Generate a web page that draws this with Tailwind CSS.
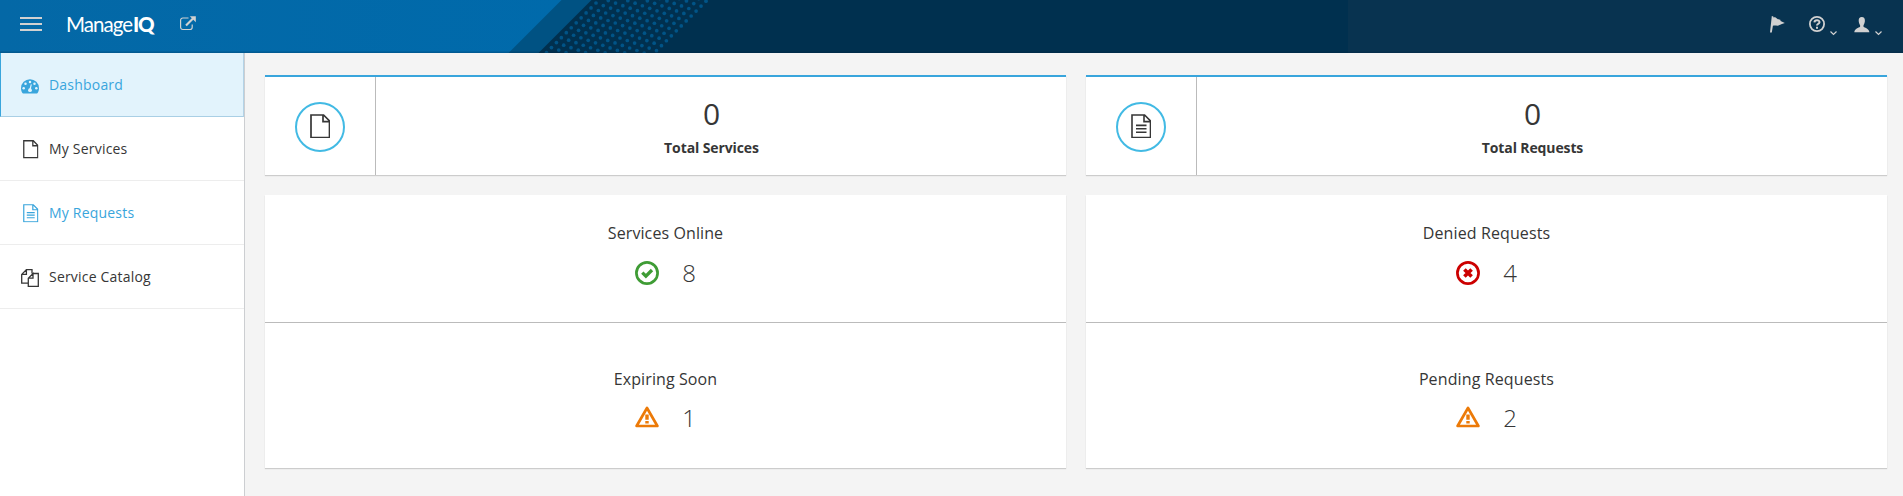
<!DOCTYPE html>
<html lang="en">
<head>
<meta charset="utf-8">
<title>ManageIQ</title>
<script src="https://cdn.jsdelivr.net/npm/@tailwindcss/browser@4"></script>
</head>
<body class="flex h-[496px] flex-col overflow-hidden bg-[#f4f4f4] font-['Open_Sans',sans-serif] text-[#363636]">
<svg class="hidden">
  <symbol id="file" viewBox="0 0 20.5 24.5"><path d="M1 1H13.6L19.5 6.9V23.5H1ZM13 1V7.6H19.5" fill="none" stroke="currentColor" stroke-width="1.7"/></symbol>
  <symbol id="file-text" viewBox="0 0 20.5 24.5"><path d="M1 1H13.6L19.5 6.9V23.5H1ZM13 1V7.6H19.5M5 11.4H15.5M5 14.8H15.5M5 18.2H15.5" fill="none" stroke="currentColor" stroke-width="1.6"/></symbol>
  <symbol id="warn" viewBox="0 0 24 22"><path d="M12 2L22.4 20H1.6Z" fill="none" stroke="currentColor" stroke-width="2.7" stroke-linejoin="round"/><path d="M10.3 8.5h3.4v5.3h-3.4zM10.3 15h3.4v2.4h-3.4z" fill="currentColor"/></symbol>
</svg>
<header class="relative h-[53px] shrink-0 bg-[#00304f]">
  <svg class="absolute inset-0" width="1903" height="53" viewBox="0 0 1903 53">
    <defs><linearGradient id="g"><stop offset="0" stop-color="#0468a6"/><stop offset="1" stop-color="#006aab"/></linearGradient></defs>
    <path d="M0 0H591.5L538.5 53H0Z" fill="#005283"/>
    <path d="M0 0H561.5L508.5 53H0Z" fill="url(#g)"/>
    <g id="dots" fill="#005487"></g>
    <path d="M1348 0H1903V53H1348Z" fill="#083350"/>
    <path d="M0 51.5H1903V53H0Z" fill="#001c38" fill-opacity=".2"/>
  </svg>
  <div class="relative flex h-full items-start">
    <svg class="ml-5 mt-4 shrink-0" width="22" height="16" viewBox="0 0 22 16" fill="#d1d1d1"><path d="M0 1h22v2H0zM0 7h22v2H0zM0 13h22v2H0z"/></svg>
    <div class="mt-[9px] ml-6 flex w-[90px] shrink-0 font-['Lato',sans-serif] text-[20.5px] leading-[30px] whitespace-nowrap text-white"><span class="w-[67px] tracking-[-0.95px]">Manage</span><span class="font-black tracking-[-1.2px]">IQ</span></div>
    <svg class="ml-6 mt-4 shrink-0" width="16" height="15" viewBox="0 0 16 15" fill="none" stroke="#d1d1d1"><path d="M8.5 2H2.8A2.2 2.2 0 0 0 .6 4.2V11.3A2.2 2.2 0 0 0 2.8 13.5H10A2.2 2.2 0 0 0 12.2 11.3V8.5" stroke-width="1.2"/><path d="M6 9.5L13 2.5" stroke-width="2.2"/><path d="M9.8.3H15.8V6.3Z" fill="#d1d1d1" stroke="none"/></svg>
    <div class="ml-auto flex items-start pr-[21px]">
      <svg class="mt-4" width="15" height="17" viewBox="0 0 15 17" fill="#d1d1d1"><path d="M1.8 0L3.4.4 3.3 1.4C5.2.9 6.2 1.8 7.2 2.7C8.3 3.5 9.4 3.3 10.3 3.7L10.6 5.1C12 5.7 13.4 6.5 14.8 7.1C12.7 7.7 11 8.3 9.6 9.1C8 10.2 5.4 9.2 2.9 9.8L1.8 16.4H0Z"/></svg>
      <svg class="ml-[24px] mt-4" width="16" height="16" viewBox="0 0 16 16"><circle cx="8" cy="8" r="7.1" fill="none" stroke="#d1d1d1" stroke-width="1.8"/><path d="M5.4 6.4C5.6 3.6 10.6 3.7 10.5 6.2C10.4 7.8 8 7.7 8 9.6M8 10.7V12.7" fill="none" stroke="#d1d1d1" stroke-width="2"/></svg>
      <svg class="ml-[5px] mt-[31px]" width="7" height="5" viewBox="0 0 7 5"><path d="M.5.5L3.5 3.5L6.5.5" fill="none" stroke="#d1d1d1" stroke-width="1.2"/></svg>
      <svg class="ml-[17px] mt-[17px]" width="16" height="16" viewBox="0 0 16 16" fill="#d1d1d1"><path d="M7.8 0C10 0 11 1.5 10.9 4C10.8 6 10 7.2 9.5 8.2V9.8C11 11 15 11.5 15.4 15.3H.3C.6 11.5 4.6 11 6.1 9.8V8.2C5.6 7.2 4.8 6 4.7 4C4.6 1.5 5.6 0 7.8 0Z"/></svg>
      <svg class="ml-[5px] mt-[31px]" width="7" height="5" viewBox="0 0 7 5"><path d="M.5.5L3.5 3.5L6.5.5" fill="none" stroke="#d1d1d1" stroke-width="1.2"/></svg>
    </div>
  </div>
</header>
<div class="flex min-h-0 flex-1">
  <nav class="w-[245px] shrink-0 border-r border-[#ccced1] bg-white text-sm leading-5 tracking-[0.2px]">
    <a class="flex h-16 items-center border-r border-b border-l border-b-[#a9cfe5] border-l-[#39a5dc] border-r-[#b3d3e7] bg-[#e2f3fc] pl-5 text-[#39a5dc]">
      <svg class="mt-0.5 mr-2.5 -mb-0.5" width="18" height="15" viewBox="0 0 18 15"><path d="M9 .2A9 9 0 0 0 0 9.2C0 11 .5 12.6 1.4 14.1Q1.6 14.5 2.1 14.5H15.9Q16.4 14.5 16.6 14.1C17.5 12.6 18 11 18 9.2A9 9 0 0 0 9 .2Z" fill="#39a5dc"/><g fill="#e2f3fc"><circle cx="2.7" cy="9.2" r="1.25"/><circle cx="4.5" cy="4.8" r="1.25"/><circle cx="9" cy="2.9" r="1.25"/><circle cx="13.5" cy="4.8" r="1.25"/><circle cx="15.3" cy="9.2" r="1.25"/><circle cx="9" cy="11.2" r="1.9"/><path d="M8.3 10.5L9.8 5.2L10.8 5.5L9.7 10.8Z"/></g></svg>
      <span>Dashboard</span></a>
    <a class="flex h-16 items-center border-b border-[#ededed] pl-[23px]"><svg class="mt-px mr-[10.5px] -mb-px" width="15.5" height="18.5"><use href="#file"/></svg><span>My Services</span></a>
    <a class="flex h-16 items-center border-b border-[#ededed] pl-[23px] text-[#39a5dc]"><svg class="mt-px mr-[10.5px] -mb-px" width="15.5" height="18.5"><use href="#file-text"/></svg><span>My Requests</span></a>
    <a class="flex h-16 items-center border-b border-[#ededed] pl-[21px]"><svg class="mt-px mr-2.5 -mb-px" width="18" height="18" viewBox="0 0 18 18" fill="none" stroke="currentColor" stroke-width="1.3"><path d="M7 14.2H.7V5.4L5.4.7H11V4.4M5.4.7V5.4H.7M12.2 4.5H17.3V17.3H7.3V9.2L12 4.5V9.2H7.3"/></svg><span>Service Catalog</span></a>
  </nav>
  <main class="grid flex-1 grid-cols-2 content-start gap-5 pt-[22px] pr-4 pl-5">
    <section class="flex h-[100px] border-t-2 border-[#39a5dc] bg-white shadow-[0_1px_1px_rgba(3,3,3,0.17)]">
      <div class="flex w-[111px] items-center justify-center border-r border-[#bbb]"><div class="mt-0.5 flex size-[50px] items-center justify-center rounded-full border-2 border-[#42bae4]"><svg class="-mt-0.5" width="20.5" height="24.5"><use href="#file"/></svg></div></div>
      <div class="flex flex-1 flex-col items-center pt-[15px] pr-[19px]"><div class="text-[30px] leading-[44px]">0</div><div class="mt-0.5 text-sm leading-5 font-bold tracking-[-0.1px]">Total Services</div></div>
    </section>
    <section class="flex h-[100px] border-t-2 border-[#39a5dc] bg-white shadow-[0_1px_1px_rgba(3,3,3,0.17)]">
      <div class="flex w-[111px] items-center justify-center border-r border-[#bbb]"><div class="mt-0.5 flex size-[50px] items-center justify-center rounded-full border-2 border-[#42bae4]"><svg class="-mt-0.5" width="20.5" height="24.5"><use href="#file-text"/></svg></div></div>
      <div class="flex flex-1 flex-col items-center pt-[15px] pr-[19px]"><div class="text-[30px] leading-[44px]">0</div><div class="mt-0.5 text-sm leading-5 font-bold tracking-[-0.12px]">Total Requests</div></div>
    </section>
    <section class="h-[273px] bg-white text-center shadow-[0_1px_1px_rgba(3,3,3,0.17)]">
      <div class="h-32 border-b border-[#bbb] pt-[26px]"><h2 class="text-base leading-6 tracking-[0.1px]">Services Online</h2>
        <div class="mt-2 flex items-center justify-center gap-[23px]"><svg width="24" height="24" viewBox="0 0 24 24" fill="none" stroke="#3f9c35"><circle cx="12" cy="12" r="10.6" stroke-width="2.7"/><path d="M7.3 11.6L10.9 15.2L17 9" stroke-width="3.3"/></svg><span class="text-2xl leading-10 font-light">8</span></div></div>
      <div class="pt-[44px]"><h2 class="text-base leading-6 tracking-[0.1px]">Expiring Soon</h2>
        <div class="mt-[7px] flex items-center justify-center gap-[23px]"><svg class="-mt-0.5 text-[#ec7a08]" width="24" height="22"><use href="#warn"/></svg><span class="text-2xl leading-10 font-light">1</span></div></div>
    </section>
    <section class="h-[273px] bg-white text-center shadow-[0_1px_1px_rgba(3,3,3,0.17)]">
      <div class="h-32 border-b border-[#bbb] pt-[26px]"><h2 class="text-base leading-6 tracking-[0.12px]">Denied Requests</h2>
        <div class="mt-2 flex items-center justify-center gap-[23px]"><svg width="24" height="24" viewBox="0 0 24 24" fill="none" stroke="#c00"><circle cx="12" cy="12" r="10.6" stroke-width="2.7"/><path d="M8.4 8.4L15.6 15.6M15.6 8.4L8.4 15.6" stroke-width="3.6"/></svg><span class="text-2xl leading-10 font-light">4</span></div></div>
      <div class="pt-[44px]"><h2 class="text-base leading-6 tracking-[0.12px]">Pending Requests</h2>
        <div class="mt-[7px] flex items-center justify-center gap-[23px]"><svg class="-mt-0.5 text-[#ec7a08]" width="24" height="22"><use href="#warn"/></svg><span class="text-2xl leading-10 font-light">2</span></div></div>
    </section>
  </main>
</div>
<script>
  // Slanted dot lattice of the header
  var dots = '';
  for (var n = 0; n < 12; n++) for (var m = 0; m < 17; m++) {
    var y = 3 - n * 2.42 + m * 4.95;
    if (y > -2 && y < 55) dots += '<circle cx="' + (596 + n * 12.25 - m * 4.95) + '" cy="' + y + '" r="1.85"/>';
  }
  document.getElementById('dots').innerHTML = dots;
</script>
</body>
</html>
